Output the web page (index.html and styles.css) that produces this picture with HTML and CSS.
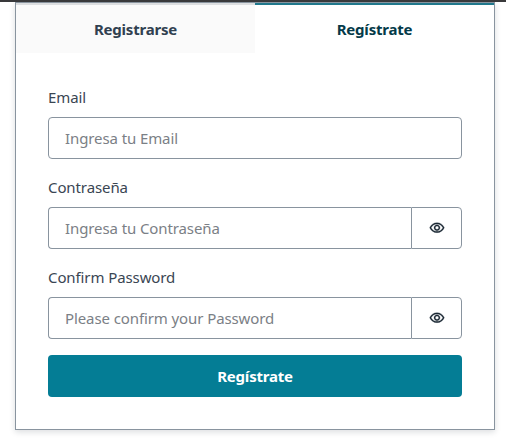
FILE: index.html
```html
<!DOCTYPE html>
<html lang="es">
<head>
<meta charset="utf-8">
<title>Regístrate</title>
<link rel="stylesheet" href="styles.css">
</head>
<body>
<main class="card">
  <div class="tabs">
    <button class="tab" type="button">Registrarse</button>
    <button class="tab tab-active" type="button">Regístrate</button>
  </div>
  <form class="form">
    <div class="field">
      <label for="email">Email</label>
      <div class="group"><input id="email" type="email" placeholder="Ingresa tu Email"></div>
    </div>
    <div class="field">
      <label for="password">Contraseña</label>
      <div class="group">
        <input id="password" type="password" placeholder="Ingresa tu Contraseña">
        <button class="reveal" type="button"><svg viewBox="0 0 24 24"><path d="M12 6C15.79 6 19.17 8.13 20.82 11.5C19.17 14.87 15.79 17 12 17C8.21 17 4.83 14.87 3.18 11.5C4.83 8.13 8.21 6 12 6ZM12 4C7 4 2.73 7.11 1 11.5C2.73 15.89 7 19 12 19C17 19 21.27 15.89 23 11.5C21.27 7.11 17 4 12 4ZM12 9C13.38 9 14.5 10.12 14.5 11.5C14.5 12.88 13.38 14 12 14C10.62 14 9.5 12.88 9.5 11.5C9.5 10.12 10.62 9 12 9ZM12 7C9.52 7 7.5 9.02 7.5 11.5C7.5 13.98 9.52 16 12 16C14.48 16 16.5 13.98 16.5 11.5C16.5 9.02 14.48 7 12 7Z"/></svg></button>
      </div>
    </div>
    <div class="field">
      <label for="confirm">Confirm Password</label>
      <div class="group">
        <input id="confirm" type="password" placeholder="Please confirm your Password">
        <button class="reveal" type="button"><svg viewBox="0 0 24 24"><path d="M12 6C15.79 6 19.17 8.13 20.82 11.5C19.17 14.87 15.79 17 12 17C8.21 17 4.83 14.87 3.18 11.5C4.83 8.13 8.21 6 12 6ZM12 4C7 4 2.73 7.11 1 11.5C2.73 15.89 7 19 12 19C17 19 21.27 15.89 23 11.5C21.27 7.11 17 4 12 4ZM12 9C13.38 9 14.5 10.12 14.5 11.5C14.5 12.88 13.38 14 12 14C10.62 14 9.5 12.88 9.5 11.5C9.5 10.12 10.62 9 12 9ZM12 7C9.52 7 7.5 9.02 7.5 11.5C7.5 13.98 9.52 16 12 16C14.48 16 16.5 13.98 16.5 11.5C16.5 9.02 14.48 7 12 7Z"/></svg></button>
      </div>
    </div>
    <button class="submit" type="button">Regístrate</button>
  </form>
</main>
</body>
</html>
```
FILE: styles.css
```css
* { box-sizing: border-box; }
body {
  margin: 0;
  height: 441px;
  overflow: hidden;
  border-top: 2px solid #39393b;
  background: #fff;
  color: #3a4653;
  font: 15px/24px "Noto Sans", sans-serif;
  letter-spacing: -0.1px;
}
button, input { font: inherit; letter-spacing: inherit; margin: 0; }
.card {
  width: 480px;
  margin-left: 15px;
  border: 1px solid #89949f;
  background: #fff;
  box-shadow: 0 2px 6px rgba(13, 26, 38, 0.15);
}
.tabs { display: grid; grid-template-columns: 239px 239px; }
.tab {
  height: 50px;
  padding: 0 0 1px;
  border: 0;
  border-top: 2px solid #dcdee0;
  background: #fafafa;
  color: #304050;
  font-weight: 700;
  letter-spacing: -0.2px;
}
.tab-active { border-top-color: #20788c; background: #fff; color: #043a49; }
.form { display: flex; flex-direction: column; gap: 16px; padding: 32px; }
.field { display: flex; flex-direction: column; gap: 8px; }
.group { display: flex; height: 42px; }
input {
  flex: 1;
  min-width: 0;
  padding: 0 16px 1px;
  border: 1px solid #89949f;
  border-radius: 4px;
  background: #fff;
  outline: 0;
}
input::placeholder { color: #7b8086; opacity: 1; }
.group input:not(:last-child) { border-radius: 4px 0 0 4px; border-right: 0; }
.reveal {
  display: flex;
  align-items: center;
  justify-content: center;
  width: 51px;
  padding: 0;
  border: 1px solid #89949f;
  border-radius: 0 4px 4px 0;
  background: #fff;
}
.reveal svg { width: 16px; height: 16px; fill: #1c2834; stroke: #1c2834; stroke-width: 0.4; }
.submit {
  height: 42px;
  padding: 0 0 1px;
  border: 0;
  border-radius: 4px;
  background: #047d95;
  color: #fff;
  font-weight: 700;
  letter-spacing: -0.2px;
}
```
